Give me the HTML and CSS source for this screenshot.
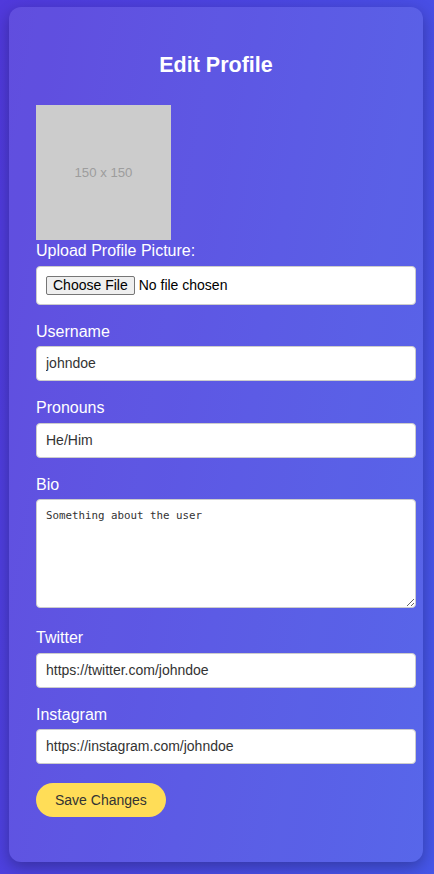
FILE: index.html
```html
<!DOCTYPE html>
<html lang="en">
<head>
<meta charset="utf-8">
<title>Edit Profile</title>
<link rel="stylesheet" href="styles.css">
</head>
<body>
<div class="card">
  <h2 class="title">Edit Profile</h2>
  <form class="form">
    <div class="group">
      <div class="avatar">150 x 150</div>
      <label class="label" for="pic">Upload Profile Picture:</label>
      <input class="field field-file" type="file" id="pic">
    </div>
    <div class="group">
      <label class="label" for="username">Username</label>
      <input class="field" type="text" id="username" value="johndoe">
    </div>
    <div class="group">
      <label class="label" for="pronouns">Pronouns</label>
      <input class="field" type="text" id="pronouns" value="He/Him">
    </div>
    <div class="group group-bio">
      <label class="label" for="bio">Bio</label>
      <textarea class="field field-area" id="bio">Something about the user</textarea>
    </div>
    <div class="group">
      <label class="label" for="twitter">Twitter</label>
      <input class="field" type="text" id="twitter" value="https://twitter.com/johndoe">
    </div>
    <div class="group">
      <label class="label" for="instagram">Instagram</label>
      <input class="field" type="text" id="instagram" value="https://instagram.com/johndoe">
    </div>
    <button class="save" type="button">Save Changes</button>
  </form>
</div>
</body>
</html>
```

FILE: styles.css
```css
html, body {
  margin: 0;
  padding: 0;
}

body {
  min-height: 874px;
  background: linear-gradient(100deg, #5039db 0%, #4556e8 100%);
  font-family: "Liberation Sans", Arial, sans-serif;
  color: #fff;
  padding: 7px 11px 12px 9px;
  box-sizing: border-box;
}

.card {
  background: rgba(255, 255, 255, 0.1);
  border-radius: 12px;
  box-shadow: 0 5px 15px rgba(0, 0, 0, 0.28);
  padding: 27px;
}

.title {
  margin: 19px 0 27px;
  font-size: 21.5px;
  line-height: 25px;
  font-weight: bold;
  text-align: center;
  color: #fff;
}

.form {
  display: flex;
  flex-direction: column;
}

.group {
  display: flex;
  flex-direction: column;
  align-items: flex-start;
  margin-bottom: 18px;
}

.avatar {
  width: 135px;
  height: 135px;
  background: #cccccc;
  color: #9d9d9d;
  font-size: 13.2px;
  display: flex;
  align-items: center;
  justify-content: center;
  margin-bottom: 2px;
}

.label {
  font-size: 16px;
  line-height: 18.5px;
  margin-bottom: 5px;
  color: #fff;
}

.field {
  display: block;
  width: 100%;
  box-sizing: content-box;
  height: 17px;
  margin: 0;
  padding: 8px 9px;
  border: 1px solid #cccccc;
  border-radius: 4px;
  background: #fff;
  color: #333;
  font-family: "Liberation Sans", Arial, sans-serif;
  font-size: 14px;
  line-height: 17px;
  outline: none;
}

.field-file {
  height: 19px;
  padding: 9px;
  color: #000;
}

.field-file::file-selector-button {
  font-family: "Liberation Sans", Arial, sans-serif;
  font-size: 14px;
  height: 19px;
  line-height: 17px;
  padding: 0 6px;
  margin: 0 4px 0 0;
  border: 1px solid #767676;
  border-radius: 2px;
  background: #efefef;
  color: #000;
}

.field-area {
  height: 89px;
  padding: 9px;
  margin-bottom: 3px;
  font-family: "DejaVu Sans Mono", monospace;
  font-size: 10.8px;
  line-height: 13px;
  resize: vertical;
}

.save {
  align-self: flex-start;
  margin: 1px 0 18px;
  height: 34px;
  padding: 0 19px;
  border: none;
  border-radius: 17px;
  background: #ffdd57;
  color: #333;
  font-family: "Liberation Sans", Arial, sans-serif;
  font-size: 14px;
  cursor: pointer;
}
```
